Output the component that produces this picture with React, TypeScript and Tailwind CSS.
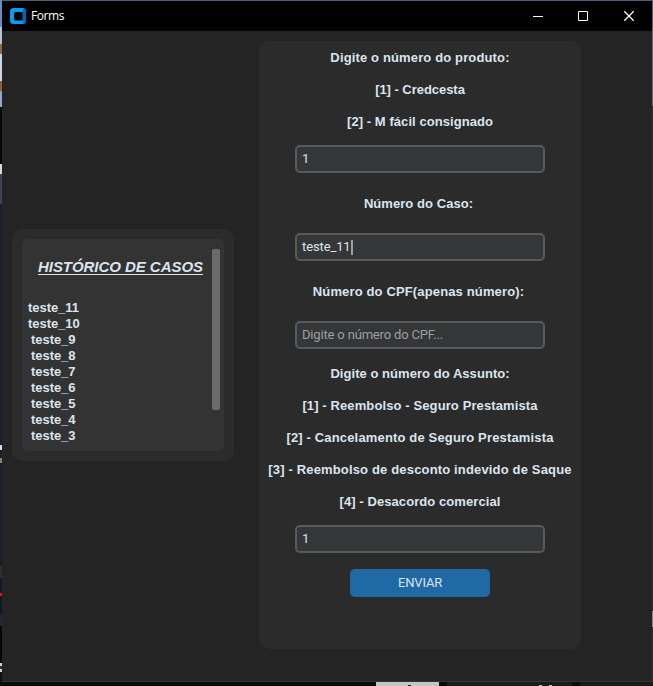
import React from "react";

const bold = "font-['Liberation_Sans',Arial,sans-serif] font-bold text-[#dce4ee]";

function Label({ children, className = "" }: { children: React.ReactNode; className?: string }) {
  return (
    <div className={`flex h-7 items-center justify-center whitespace-nowrap pt-0.5 text-[13px] ${bold} ${className}`}>
      <span>{children}</span>
    </div>
  );
}

function Entry({ value, placeholder, caret, className = "" }: { value?: string; placeholder?: string; caret?: boolean; className?: string }) {
  return (
    <div
      className={`mx-auto flex h-7 w-[250px] items-center rounded-[5px] border-2 border-[#565b5e] bg-[#343638] pl-[5px] font-[Roboto,sans-serif] text-[13px] text-[#dce4ee] ${className}`}
    >
      {value && <span className="tracking-[-0.12px]">{value}</span>}
      {placeholder && <span className="tracking-[-0.17px] text-[#9e9e9e]">{placeholder}</span>}
      {caret && <span className="h-[15px] w-[2px] bg-[#a0a0a0]" />}
    </div>
  );
}

function TitleBar() {
  return (
    <header className="flex h-[30px] shrink-0 items-center bg-black pl-2">
      <svg width="16" height="16" viewBox="0 0 16 16">
        <rect width="16" height="16" rx="3.5" fill="#0a9bf5" />
        <path d="M12 4 14 0.500Q16 1 16 3.5V12.500Q16 15.500 14 15.700L12 12Z" fill="#0865b0" />
        <rect x="4" y="4" width="8.500" height="8.500" rx="1.500" fill="#000" />
      </svg>
      <h1 className="ml-[5px] font-['Open_Sans',sans-serif] text-[12px] leading-4 tracking-[-0.45px] text-white">Forms</h1>
      <svg className="ml-auto mr-[17px]" width="102" height="12" viewBox="0 0 102 12" fill="none" stroke="#fff">
        <path d="M0 6.500H10M45.500 1.500H54.500V10.500H45.500Z" />
        <path strokeWidth="1.300" d="M91.300 1.300L100.700 10.700M100.700 1.300L91.300 10.700" />
      </svg>
    </header>
  );
}

const cases = ["teste_9", "teste_8", "teste_7", "teste_6", "teste_5", "teste_4", "teste_3"];

function History() {
  return (
    <section className="mt-[198px] h-[232px] w-[222px] rounded-[10px] bg-[#2b2b2b] p-[10px]">
      <div className="flex h-[212px] justify-between rounded-[5px] bg-[#333333] pr-1">
        <div className={`pl-1.5 pt-[18px] ${bold}`}>
          <h2 className="ml-[10px] whitespace-nowrap text-[15px] italic leading-5 tracking-[-0.05px] underline decoration-1 underline-offset-2">
            HISTÓRICO DE CASOS
          </h2>
          <ul className="mt-[23px] text-[13px] leading-4 tracking-[-0.05px]">
            <li>teste_11</li>
            <li>teste_10</li>
            {cases.map((c) => (
              <li key={c} className="pl-[3px]">{c}</li>
            ))}
          </ul>
        </div>
        <div className="mt-[10px] h-[161px] w-2 rounded-[2px] bg-[#6b6b6b]" />
      </div>
    </section>
  );
}

function Form() {
  return (
    <section className="ml-[25px] mt-[10px] h-[608px] w-[322px] rounded-[10px] bg-[#2b2b2b] pt-0.5">
      <Label className="tracking-[0.14px]">Digite o número do produto:</Label>
      <Label className="mt-1 tracking-[-0.04px]">[1] - Credcesta</Label>
      <Label className="mt-1 tracking-[0.06px]">[2] - M fácil consignado</Label>
      <Entry className="mt-2.5" value="1" />
      <Label className="mt-4 pr-[3px] tracking-[0.06px]">Número do Caso:</Label>
      <Entry className="mt-4" value="teste_11" caret />
      <Label className="mt-4 pr-[3px] tracking-[0.14px]">Número do CPF(apenas número):</Label>
      <Entry className="mt-4" placeholder="Digite o número do CPF..." />
      <Label className="mt-2.5 tracking-[0.05px]">Digite o número do Assunto:</Label>
      <Label className="mt-1 tracking-[0.11px]">[1] - Reembolso - Seguro Prestamista</Label>
      <Label className="mt-1 tracking-[0.16px]">[2] - Cancelamento de Seguro Prestamista</Label>
      <Label className="mt-1 tracking-[0.16px]">[3] - Reembolso de desconto indevido de Saque</Label>
      <Label className="mt-1 tracking-[0.08px]">[4] - Desacordo comercial</Label>
      <Entry className="mt-2.5" value="1" />
      <button className="mx-auto mt-4 flex h-7 w-[140px] items-center justify-center rounded-[5px] bg-[#1f6aa5] font-[Roboto,sans-serif] text-[13px] tracking-[-0.15px] text-[#dce4ee]">
        ENVIAR
      </button>
    </section>
  );
}

function LeftEdge() {
  return (
    <div className="flex w-0.5 shrink-0 flex-col bg-[#101010]">
      <div className="h-[27px] bg-[#6b8cc0]" />
      <div className="h-[17px] bg-[#b8c4d8]" />
      <div className="h-[10px] bg-[#8a6a48]" />
      <div className="h-[27px] bg-[#cfd6e2]" />
      <div className="h-[10px] bg-[#8a6238]" />
      <div className="h-[16px] bg-[#8ea6d0]" />
      <div className="h-[57px] bg-[#080808]" />
      <div className="h-[10px] bg-[#d8d8d8]" />
      <div className="h-[30px] bg-[#3b4656]" />
      <div className="h-[241px] bg-[#16202a]" />
      <div className="h-[5px] bg-[#d8dcd8]" />
      <div className="h-[8px] bg-[#16202a]" />
      <div className="h-[5px] bg-[#7c8a68]" />
      <div className="h-[103px] bg-[#16202a]" />
      <div className="h-[12px] bg-[#2b3036]" />
      <div className="h-[15px] bg-[#101a24]" />
      <div className="h-[3px] bg-[#e0102a]" />
      <div className="h-[19px] bg-[#101a24]" />
      <div className="h-[11px] bg-[#1d2b38]" />
      <div className="h-[37px] bg-[#050505]" />
      <div className="h-[3px] bg-[#d0d0d0]" />
      <div className="h-[3px] bg-[#303038]" />
      <div className="h-[3px] bg-[#d0d0d0]" />
    </div>
  );
}

export default function App() {
  return (
    <div className="flex h-[686px] w-[653px] flex-col overflow-hidden bg-[#0a0a0a]">
      <div className="flex h-[682px]">
        <LeftEdge />
        <div className="flex w-[650px] flex-col border-b border-[#363636] bg-[#242424]">
          <div className="h-px shrink-0 bg-[#4c5d76]" />
          <TitleBar />
          <main className="flex items-start pl-[10px]">
            <History />
            <Form />
          </main>
        </div>
        <div className="flex w-px flex-col bg-[#303030]">
          <div className="h-[27px] bg-[#4c6080]" />
          <div className="h-[79px] bg-[#686c74]" />
          <div className="h-[505px]" />
          <div className="h-[16px] bg-[#858585]" />
        </div>
      </div>
      <div className="flex h-1 bg-[#0a0a0a]">
        <div className="ml-[376px] flex h-1 w-[63px] items-end bg-[#c4c4c4]">
          <div className="ml-8 h-px w-[3px] bg-[#222222]" />
        </div>
        <div className="ml-2 flex h-1 w-[125px] items-end bg-[#1b1b1b]">
          <div className="ml-[92px] h-px w-[3px] bg-[#bbbbbb]" />
          <div className="ml-[7px] h-px w-[3px] bg-[#bbbbbb]" />
        </div>
        <div className="ml-2 h-1 flex-1 bg-[#191919]" />
      </div>
    </div>
  );
}
